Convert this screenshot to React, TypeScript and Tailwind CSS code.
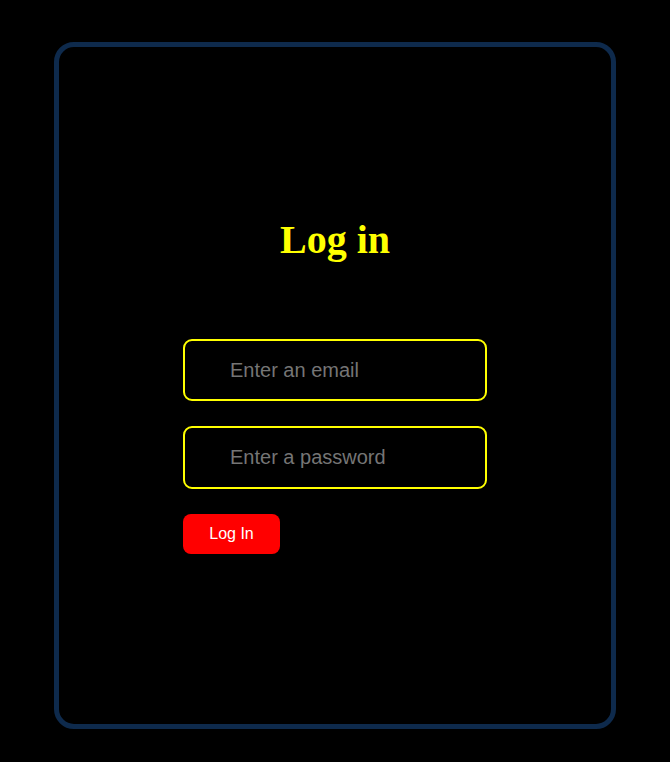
export default function App() {
  return (
    <main className="min-h-[762px] bg-black pt-[42px] pl-[54px]">
      {/* Card */}
      <div className="w-[562px] h-[687px] border-[5px] border-[#0e2a4c] rounded-[20px] flex flex-col items-center justify-center">
        <h1 className="text-[40px] leading-[46px] font-bold text-[#ffff00] [font-family:'Liberation_Serif','Times_New_Roman',serif]">
          Log in
        </h1>

        <form className="w-[304px] mt-[76px] flex flex-col items-start gap-[25px] [font-family:'Liberation_Sans',Arial,sans-serif]">
          <input
            type="email"
            placeholder="Enter an email"
            className="w-full h-[62px] border-2 border-[#ffff00] rounded-[9px] bg-black pl-[45px] text-[20px] text-white placeholder:text-[#757575] outline-none"
          />
          <input
            type="password"
            placeholder="Enter a password"
            className="w-full h-[63px] border-2 border-[#ffff00] rounded-[9px] bg-black pl-[45px] text-[20px] text-white placeholder:text-[#757575] outline-none"
          />
          <button
            type="button"
            className="w-[97px] h-[40px] bg-[#ff0000] text-white text-[16px] rounded-[8px]"
          >
            Log In
          </button>
        </form>
      </div>
    </main>
  )
}
